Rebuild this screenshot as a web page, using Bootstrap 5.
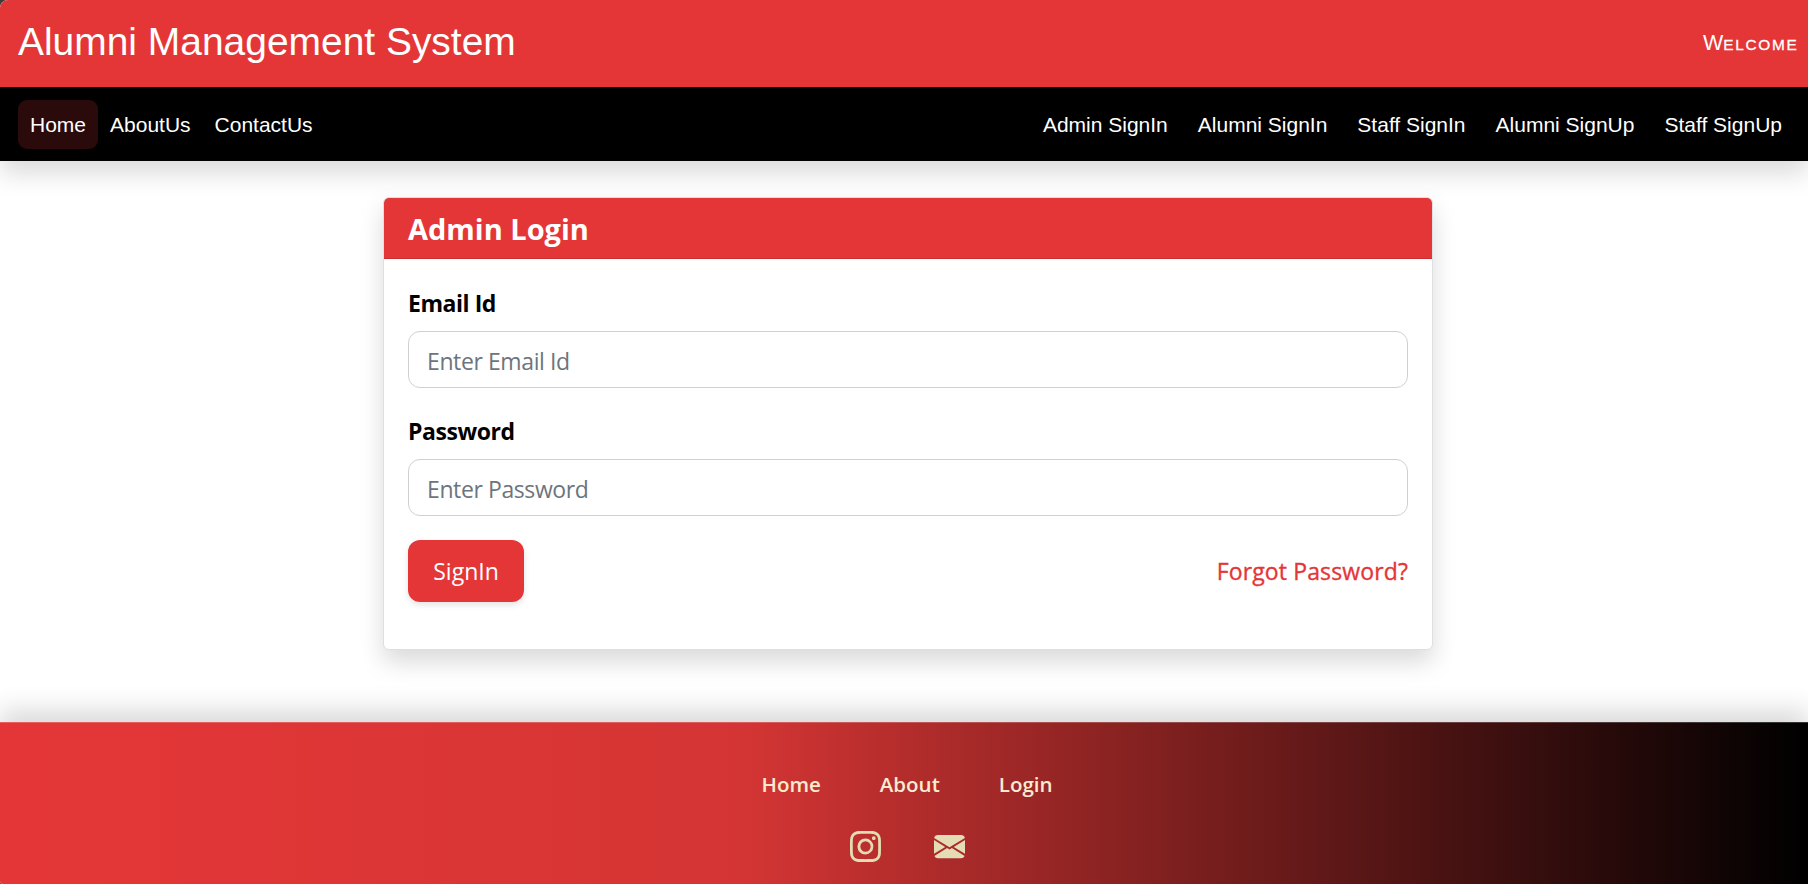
<!DOCTYPE html>
<html lang="en">
<head>
<meta charset="utf-8">
<meta name="viewport" content="width=device-width, initial-scale=1">
<title>Alumni Management System</title>
<link rel="stylesheet" href="https://cdn.jsdelivr.net/npm/bootstrap@5.3.0/dist/css/bootstrap.min.css">
<style>
  :root { --brand: #e53637; }
  html { background: #3c3c3c; }
  body { font-family: "Open Sans", "Noto Sans", sans-serif; font-size: 24px; line-height: 1.5; color: #000; background: transparent; height: 884px; overflow: hidden; }
  .page-shell { height: 884px; background: #fff; border-radius: 8px 0 0 3px; overflow: hidden; }
  .site-top { font-family: "Liberation Sans", Arial, sans-serif; box-shadow: 0 12px 24px rgba(0,0,0,.15); }
  .brand-bar { background: var(--brand); height: 87px; padding: 0 11px 3px 18px; color: #fff; }
  .brand-title { font-size: 38.95px; line-height: 1.2; }
  .welcome { font-size: 21.5px; padding-top: 3px; }
  .welcome span { font-size: 15.4px; letter-spacing: 1.7px; margin-right: -1.4px; -webkit-text-stroke: .3px #fff; }
  .menu-bar { background: #000; height: 74px; padding: 0 14px 0 18px; }
  .menu-bar .nav-link { color: #fff; font-size: 21px; line-height: 31px; padding: 9px 12px; border-radius: 9px; }
  .menu-bar .nav-link.active { background: #2a0a0b; }
  .menu-right { gap: 6px; }
  .login-area { height: 561px; padding-top: 36px; }
  .login-card { width: 1050px; height: 453px; margin-left: 383px; border-radius: 6px; border: 1px solid #dedfe0; box-shadow: 0 12px 24px rgba(0,0,0,.15); }
  .login-card .card-header { background: var(--brand); height: 61px; padding: 0 24px; border-radius: 5px 5px 0 0; border-bottom: 1px solid #c92f30; }
  .card-heading { font-size: 29px; font-weight: 700; color: #fff; line-height: 61px; }
  .login-card .card-body { padding: 25px 24px; }
  .login-card .form-label { display: block; font-size: 23px; font-weight: 700; line-height: 38px; letter-spacing: -.45px; margin: 0 0 9px; }
  .login-card .form-control { height: 57px; font-size: 23px; letter-spacing: -.4px; padding: 9px 18px 7px; border-radius: 12px; border: 1px solid #ced0d2; margin-bottom: 24px; }
  .login-card .form-control::placeholder { color: #6c757d; }
  .btn-signin { background: var(--brand); color: #fff; font-size: 23px; width: 116px; height: 62px; border: 0; border-radius: 12px; box-shadow: 0 3px 6px rgba(0,0,0,.11); padding: 1px 0 0; }
  .forgot { color: var(--brand); font-size: 23px; font-weight: 500; letter-spacing: .13px; padding-top: 1px; -webkit-text-stroke: .35px var(--brand); text-decoration: none; }
  .site-foot { position: relative; height: 162px; padding-top: 43px; border-top: 1px solid rgba(255,255,255,.2); background: linear-gradient(90deg, #e53637 0%, #d43534 41%, #000 100%) border-box; box-shadow: 0 -12px 24px rgba(0,0,0,.15); }
  .foot-links { gap: 59px; padding-left: 6px; }
  .foot-links a { color: #faebd0; font-size: 20.5px; font-weight: 600; line-height: 37px; text-decoration: none; }
  .foot-icons { gap: 53px; margin-top: 28px; padding-left: 7px; color: #e3dcb4; }
  .foot-icons svg { width: 31px; height: 31px; display: block; }
</style>
</head>
<body>
<div class="page-shell d-flex flex-column">
  <header class="site-top">
    <div class="brand-bar d-flex align-items-center justify-content-between">
      <div class="brand-title">Alumni Management System</div>
      <div class="welcome">W<span>ELCOME</span></div>
    </div>
    <nav class="menu-bar d-flex align-items-center justify-content-between">
      <div class="nav">
        <a class="nav-link active" href="#">Home</a>
        <a class="nav-link" href="#">AboutUs</a>
        <a class="nav-link" href="#">ContactUs</a>
      </div>
      <div class="nav menu-right">
        <a class="nav-link" href="#">Admin SignIn</a>
        <a class="nav-link" href="#">Alumni SignIn</a>
        <a class="nav-link" href="#">Staff SignIn</a>
        <a class="nav-link" href="#">Alumni SignUp</a>
        <a class="nav-link" href="#">Staff SignUp</a>
      </div>
    </nav>
  </header>
  <main class="login-area">
    <div class="card login-card">
      <div class="card-header"><div class="card-heading">Admin Login</div></div>
      <form class="card-body">
        <label class="form-label" for="email">Email Id</label>
        <input class="form-control" id="email" type="email" placeholder="Enter Email Id">
        <label class="form-label" for="pass">Password</label>
        <input class="form-control" id="pass" type="password" placeholder="Enter Password">
        <div class="d-flex align-items-center justify-content-between">
          <button class="btn btn-signin" type="button">SignIn</button>
          <a class="forgot" href="#">Forgot Password?</a>
        </div>
      </form>
    </div>
  </main>
  <footer class="site-foot">
    <div class="foot-links d-flex justify-content-center">
      <a href="#">Home</a><a href="#">About</a><a href="#">Login</a>
    </div>
    <div class="foot-icons d-flex justify-content-center">
      <svg viewBox="0 0 16 16" fill="currentColor" aria-label="Instagram"><path d="M8 0C5.829 0 5.556.01 4.703.048 3.85.088 3.269.222 2.76.42a3.917 3.917 0 0 0-1.417.923A3.927 3.927 0 0 0 .42 2.76C.222 3.268.087 3.85.048 4.7.01 5.555 0 5.827 0 8.001c0 2.172.01 2.444.048 3.297.04.852.174 1.433.372 1.942.205.526.478.972.923 1.417.444.445.89.719 1.416.923.51.198 1.09.333 1.942.372C5.555 15.99 5.827 16 8 16s2.444-.01 3.298-.048c.851-.04 1.434-.174 1.943-.372a3.916 3.916 0 0 0 1.416-.923c.445-.445.718-.891.923-1.417.197-.509.332-1.09.372-1.942C15.99 10.445 16 10.173 16 8s-.01-2.445-.048-3.299c-.04-.851-.175-1.433-.372-1.941a3.926 3.926 0 0 0-.923-1.417A3.911 3.911 0 0 0 13.24.42c-.51-.198-1.092-.333-1.943-.372C10.443.01 10.172 0 7.998 0h.003zm-.717 1.442h.718c2.136 0 2.389.007 3.232.046.78.035 1.204.166 1.486.275.373.145.64.319.92.599.28.28.453.546.598.92.11.281.24.705.275 1.485.039.843.047 1.096.047 3.231s-.008 2.389-.047 3.232c-.035.78-.166 1.203-.275 1.485a2.47 2.47 0 0 1-.599.919c-.28.28-.546.453-.92.598-.28.11-.704.24-1.485.276-.843.038-1.096.047-3.232.047s-2.39-.009-3.233-.047c-.78-.036-1.203-.166-1.485-.276a2.478 2.478 0 0 1-.92-.598 2.48 2.48 0 0 1-.6-.92c-.109-.281-.24-.705-.275-1.485-.038-.843-.046-1.096-.046-3.233 0-2.136.008-2.388.046-3.231.036-.78.166-1.204.276-1.486.145-.373.319-.64.599-.92.28-.28.546-.453.92-.598.282-.11.705-.24 1.485-.276.738-.034 1.024-.044 2.515-.045v.002zm4.988 1.328a.96.96 0 1 0 0 1.92.96.96 0 0 0 0-1.92zm-4.27 1.122a4.109 4.109 0 1 0 0 8.217 4.109 4.109 0 0 0 0-8.217zm0 1.441a2.667 2.667 0 1 1 0 5.334 2.667 2.667 0 0 1 0-5.334z"/></svg>
      <svg viewBox="0 0 16 16" fill="currentColor" aria-label="Email"><path d="M.05 3.555A2 2 0 0 1 2 2h12a2 2 0 0 1 1.95 1.555L8 8.414.05 3.555ZM0 4.697v7.104l5.803-3.558L0 4.697ZM6.761 8.83l-6.57 4.027A2 2 0 0 0 2 14h12a2 2 0 0 0 1.808-1.144l-6.57-4.027L8 9.586l-1.239-.757Zm3.436-.586L16 11.801V4.697l-5.803 3.546Z"/></svg>
    </div>
  </footer>
</div>
<script src="https://cdn.jsdelivr.net/npm/bootstrap@5.3.0/dist/js/bootstrap.bundle.min.js"></script>
</body>
</html>
